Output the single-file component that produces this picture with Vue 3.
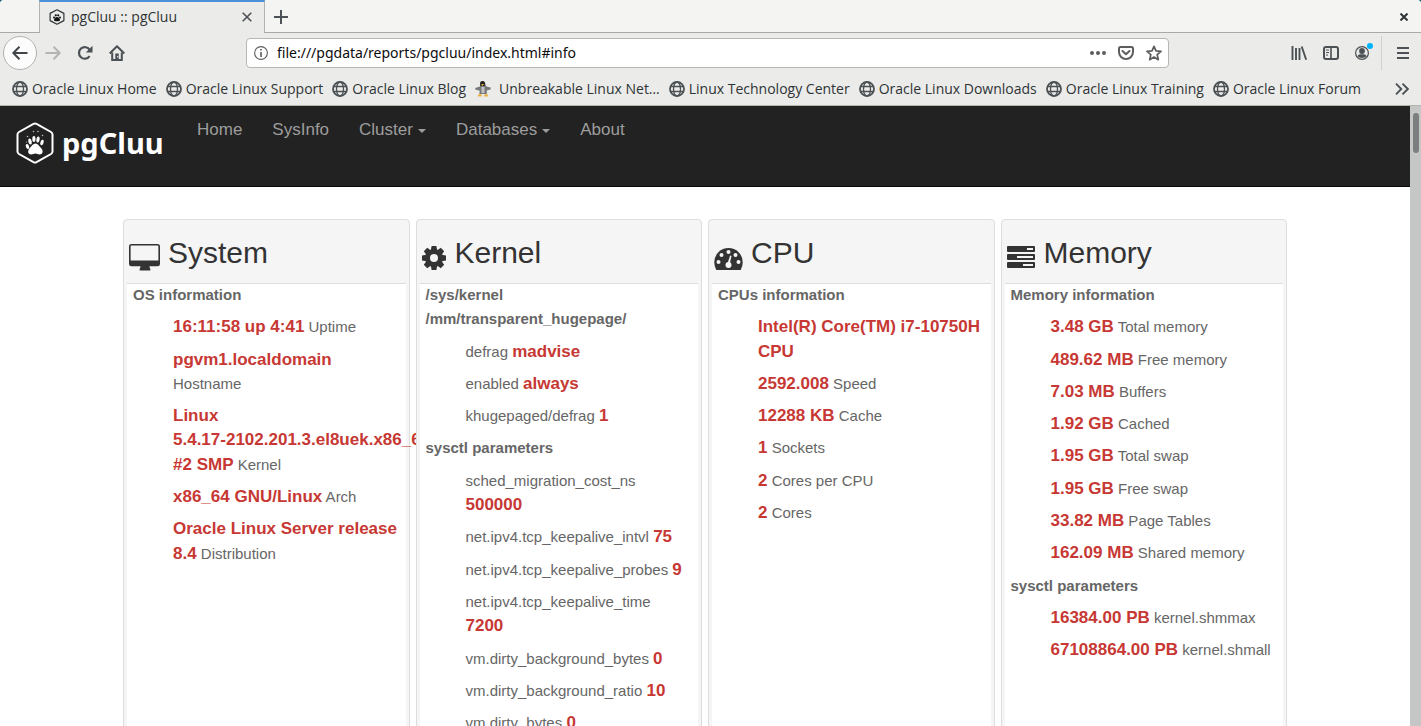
<script setup>
const bookmarks = [
  { label: 'Oracle Linux Home' },
  { label: 'Oracle Linux Support' },
  { label: 'Oracle Linux Blog' },
  { label: 'Unbreakable Linux Net…', penguin: true },
  { label: 'Linux Technology Center' },
  { label: 'Oracle Linux Downloads' },
  { label: 'Oracle Linux Training' },
  { label: 'Oracle Linux Forum' },
]

const menu = [
  { label: 'Home' },
  { label: 'SysInfo' },
  { label: 'Cluster', caret: true },
  { label: 'Databases', caret: true },
  { label: 'About' },
]

const panels = [
  {
    title: 'System',
    icon: 'desktop',
    groups: [
      {
        heading: ['OS information'],
        rows: [
          { value: '16:11:58 up 4:41', label: 'Uptime' },
          { value: 'pgvm1.localdomain', label: 'Hostname' },
          // word joiner keeps the release string on one line
          { value: 'Linux 5.4.17-\u20602102.201.3.el8uek.x86_64 #2 SMP', label: 'Kernel' },
          { value: 'x86_64 GNU/Linux', label: 'Arch' },
          { value: 'Oracle Linux Server release 8.4', label: 'Distribution' },
        ],
      },
    ],
  },
  {
    title: 'Kernel',
    icon: 'gear',
    groups: [
      {
        heading: ['/sys/kernel', '/mm/transparent_hugepage/'],
        rows: [
          { before: 'defrag', value: 'madvise' },
          { before: 'enabled', value: 'always' },
          { before: 'khugepaged/defrag', value: '1' },
        ],
      },
      {
        heading: ['sysctl parameters'],
        rows: [
          { before: 'sched_migration_cost_ns', value: '500000' },
          { before: 'net.ipv4.tcp_keepalive_intvl', value: '75' },
          { before: 'net.ipv4.tcp_keepalive_probes', value: '9' },
          { before: 'net.ipv4.tcp_keepalive_time', value: '7200' },
          { before: 'vm.dirty_background_bytes', value: '0' },
          { before: 'vm.dirty_background_ratio', value: '10' },
          { before: 'vm.dirty_bytes', value: '0' },
        ],
      },
    ],
  },
  {
    title: 'CPU',
    icon: 'gauge',
    groups: [
      {
        heading: ['CPUs information'],
        rows: [
          { value: 'Intel(R) Core(TM) i7-10750H CPU' },
          { value: '2592.008', label: 'Speed' },
          { value: '12288 KB', label: 'Cache' },
          { value: '1', label: 'Sockets' },
          { value: '2', label: 'Cores per CPU' },
          { value: '2', label: 'Cores' },
        ],
      },
    ],
  },
  {
    title: 'Memory',
    icon: 'bars',
    groups: [
      {
        heading: ['Memory information'],
        rows: [
          { value: '3.48 GB', label: 'Total memory' },
          { value: '489.62 MB', label: 'Free memory' },
          { value: '7.03 MB', label: 'Buffers' },
          { value: '1.92 GB', label: 'Cached' },
          { value: '1.95 GB', label: 'Total swap' },
          { value: '1.95 GB', label: 'Free swap' },
          { value: '33.82 MB', label: 'Page Tables' },
          { value: '162.09 MB', label: 'Shared memory' },
        ],
      },
      {
        heading: ['sysctl parameters'],
        rows: [
          { value: '16384.00 PB', label: 'kernel.shmmax' },
          { value: '67108864.00 PB', label: 'kernel.shmall' },
        ],
      },
    ],
  },
]
</script>

<template>
  <div class="window">
    <header class="chrome">
      <div class="tabs">
        <div class="tab">
          <svg width="16" height="16" viewBox="0 0 16 16">
            <path d="M8 .8 14.900 4.400V11.600L8 15.200 1.100 11.600V4.400Z" fill="none" stroke="#2e3436" stroke-width="1.200" stroke-linejoin="round" />
            <path d="M8 8c1.500 0 3 1.500 3 3 0 1.200-1.500 1.200-3 1.200S5 12.200 5 11c0-1.500 1.500-3 3-3Z" fill="#111" />
            <circle cx="5" cy="8.400" r="1" fill="#111" /><circle cx="6.800" cy="6.300" r="1.100" fill="#111" />
            <circle cx="9.200" cy="6.300" r="1.100" fill="#111" /><circle cx="11" cy="8.400" r="1" fill="#111" />
          </svg>
          <span class="tab-title">pgCluu :: pgCluu</span>
          <button class="icon-btn" aria-label="Close tab">
            <svg width="10" height="10" viewBox="0 0 10 10"><path d="M.7.7 9.300 9.300M9.300.7.7 9.300" stroke="#4b5154" stroke-width="1.600" /></svg>
          </button>
        </div>
        <button class="icon-btn new-tab" aria-label="New tab">
          <svg width="14" height="14" viewBox="0 0 14 14"><path d="M7 0V14M0 7H14" stroke="#4b5154" stroke-width="2" /></svg>
        </button>
        <button class="icon-btn close-window" aria-label="Close window">
          <svg width="8" height="8" viewBox="0 0 8 8"><path d="M.5.5 7.500 7.500M7.500.5.5 7.500" stroke="#2e3436" stroke-width="2" /></svg>
        </button>
      </div>

      <div class="toolbar">
        <div class="nav-buttons">
          <button class="icon-btn back" aria-label="Back">
            <svg width="16" height="16" viewBox="0 0 16 16"><path d="M15.500 8H1.500M7.500 1.800 1.300 8l6.200 6.200" fill="none" stroke="#3f4548" stroke-width="2" stroke-linejoin="round" /></svg>
          </button>
          <button class="icon-btn" aria-label="Forward">
            <svg width="16" height="16" viewBox="0 0 16 16"><path d="M.5 8H14.500M8.500 1.800 14.700 8l-6.200 6.200" fill="none" stroke="#b3b4b4" stroke-width="2" stroke-linejoin="round" /></svg>
          </button>
          <button class="icon-btn" aria-label="Reload">
            <svg width="16" height="16" viewBox="0 0 16 16"><path d="M12.600 11.200A5.800 5.800 0 1 1 12.800 5" fill="none" stroke="#4b5154" stroke-width="2.200" /><path d="M15.500.8V7.500H8.800Z" fill="#4b5154" /></svg>
          </button>
          <button class="icon-btn" aria-label="Home page">
            <svg width="16" height="16" viewBox="0 0 16 16"><path d="M.7 8.500 8 1.200l7.300 7.300" fill="none" stroke="#4b5154" stroke-width="2" stroke-linejoin="round" /><path d="M3.200 7.500V15H12.800V7.500" fill="none" stroke="#4b5154" stroke-width="2" /><path d="M6.300 15V8.500H9.700V15Z" fill="#4b5154" /><circle cx="8.700" cy="11.700" r=".7" fill="#ededeb" /></svg>
          </button>
        </div>
        <div class="url-bar">
          <svg width="14" height="14" viewBox="0 0 14 14"><circle cx="7" cy="7" r="6.400" fill="none" stroke="#5d5d5f" stroke-width="1.100" /><path d="M7 3V4.600M7 6V11" stroke="#5d5d5f" stroke-width="1.600" /></svg>
          <input class="url" type="text" aria-label="Address" value="file:///pgdata/reports/pgcluu/index.html#info">
          <button class="icon-btn" aria-label="Page actions">
            <svg width="16" height="16" viewBox="0 0 16 16" fill="#5d5d5f"><circle cx="2" cy="8" r="2" /><circle cx="8" cy="8" r="2" /><circle cx="14" cy="8" r="2" /></svg>
          </button>
          <button class="icon-btn" aria-label="Save to Pocket">
            <svg width="16" height="16" viewBox="0 0 16 16" fill="none" stroke="#5d5d5f" stroke-width="2"><path d="M2.500 2H13.500Q15 2 15 3.500V7A7 7 0 0 1 1 7V3.500Q1 2 2.500 2Z" /><path d="M4.500 6 8 9.300 11.500 6" stroke-linecap="round" stroke-linejoin="round" /></svg>
          </button>
          <button class="icon-btn" aria-label="Bookmark this page">
            <svg width="16" height="16" viewBox="0 0 16 16"><path d="M8 1.300 10 5.900 15 6.400 11.200 9.700 12.300 14.700 8 12.100 3.700 14.700 4.800 9.700 1 6.400 6 5.900Z" fill="none" stroke="#5d5d5f" stroke-width="1.700" stroke-linejoin="round" /></svg>
          </button>
        </div>
        <div class="tools">
          <button class="icon-btn" aria-label="Library">
            <svg width="16" height="16" viewBox="0 0 16 16" stroke="#4b5154" fill="none"><path d="M1.500 1V15M5 3V15M8.500 3V15" stroke-width="1.900" /><path d="M10.700 1.500 15.200 14.800" stroke-width="1.900" /></svg>
          </button>
          <button class="icon-btn" aria-label="Sidebars">
            <svg width="16" height="16" viewBox="0 0 16 16" stroke="#4b5154" fill="none"><rect x="1" y="2" width="14" height="12" rx="2" stroke-width="2" /><path d="M8 2V14" stroke-width="1.600" /><path d="M3 5H6M3 7.500H6M3 10H5" stroke-width="1" /></svg>
          </button>
          <button class="icon-btn" aria-label="Account">
            <svg width="20" height="20" viewBox="0 0 20 20"><circle cx="9" cy="10" r="6.400" fill="none" stroke="#4b5154" stroke-width="1.200" /><circle cx="9" cy="8" r="2.900" fill="#4b5154" /><path d="M4.300 13.300Q5.500 11.200 7 11.200H11Q12.500 11.200 13.700 13.300Q9 16.500 4.300 13.300Z" fill="#4b5154" /><circle cx="17" cy="3" r="3" fill="#00b3ff" /></svg>
          </button>
          <span class="divider"></span>
          <button class="icon-btn" aria-label="Open menu">
            <svg width="12" height="12" viewBox="0 0 12 12"><path d="M0 1H12M0 6H12M0 11H12" stroke="#4b5154" stroke-width="2" /></svg>
          </button>
        </div>
      </div>

      <nav class="bookmarks" aria-label="Bookmarks">
        <a v-for="b in bookmarks" :key="b.label" href="#" class="bookmark" :class="{ wide: b.penguin }">
          <svg v-if="b.penguin" width="16" height="16" viewBox="0 0 16 16">
            <path d="M5.500 1.500Q8 -1 10 1.500L11 5 13 6 15.800 6.500 15.500 8.500 11.800 9.500V13H4.500V9.500L.5 8.800.2 7 5 5.500Z" fill="#77797a" />
            <path d="M5 3Q5 0 7.500 0T10 3L9.500 5H5.500Z" fill="#222" />
            <path d="M6 3H9L7.500 5Z" fill="#f0b32c" />
            <path d="M6.500 6H9.500V12H6.500Z" fill="#c0c2c3" />
            <path d="M3 14Q5 12 7 14.500L6.500 15.500H3ZM9 14.500Q11 12 13 14V15.500H9Z" fill="#e9b243" />
          </svg>
          <svg v-else width="16" height="16" viewBox="0 0 16 16" fill="none" stroke="#4b5154">
            <circle cx="8" cy="8" r="7" stroke-width="1.800" /><ellipse cx="8" cy="8" rx="3.500" ry="7" stroke-width="1.300" /><path d="M1.500 5.500H14.500M1.500 10.500H14.500" stroke-width="1.300" />
          </svg>
          <span>{{ b.label }}</span>
        </a>
        <button class="icon-btn overflow" aria-label="More bookmarks">
          <svg width="14" height="12" viewBox="0 0 14 12"><path d="M1 .7 6.300 6 1 11.300M7.500.7 12.800 6 7.500 11.300" fill="none" stroke="#4b5154" stroke-width="1.900" /></svg>
        </button>
      </nav>
    </header>

    <div class="viewport">
      <div class="page">
        <nav class="navbar">
          <a href="#" class="brand">
            <svg width="38" height="42" viewBox="0 0 38 42">
              <path d="M17.500 1.800Q19 1 20.500 1.800L35 10Q36.500 11 36.500 12.500V29.500Q36.500 31 35 32L20.500 40.200Q19 41 17.500 40.200L3 32Q1.500 31 1.500 29.500V12.500Q1.500 11 3 10Z" fill="none" stroke="#fff" stroke-width="2" />
              <g fill="#fff">
                <path d="M19.500 21.500C22 21.500 23 24 25 26 28 29 26.500 32.500 23.500 32.500 22 32.500 21 31.500 19.500 31.500S16.500 32.500 15.200 32.500C12 32.500 11 29 13.800 26 15.700 24 17 21.500 19.500 21.500Z" />
                <ellipse cx="11.500" cy="24.500" rx="1.600" ry="2.600" transform="rotate(-20 11.500 24.500)" />
                <ellipse cx="14" cy="19.500" rx="1.700" ry="3" transform="rotate(-12 14 19.500)" />
                <ellipse cx="17.900" cy="17" rx="1.600" ry="3" />
                <ellipse cx="22" cy="17.500" rx="1.600" ry="3" transform="rotate(8 22 17.500)" />
                <ellipse cx="26" cy="20.500" rx="1.600" ry="2.800" transform="rotate(20 26 20.500)" />
                <g opacity=".7"><circle cx="11.500" cy="14.500" r=".8" /><circle cx="17.500" cy="9.500" r=".8" /><circle cx="22" cy="9.500" r=".8" /><circle cx="26.500" cy="13.500" r=".8" /><circle cx="10.500" cy="20" r=".6" /></g>
              </g>
            </svg>
            <span>pgCluu</span>
          </a>
          <ul class="menu">
            <li v-for="m in menu" :key="m.label">
              <a href="#">{{ m.label }}<span v-if="m.caret" class="caret"></span></a>
            </li>
          </ul>
        </nav>

        <main class="panels">
          <section v-for="p in panels" :key="p.title" class="panel">
            <h2 class="panel-head">
              <svg v-if="p.icon === 'desktop'" width="32" height="28" viewBox="0 0 32 28"><path d="M2.500 0H28.500Q31 0 31 2.500V20Q31 22.300 28.500 22.300H20.500Q20.500 24 21.300 24.800V26.500H10.700V24.800Q11.500 24 11.500 22.300H2.500Q0 22.300 0 20V2.500Q0 0 2.500 0ZM2.500 1.500Q1.600 1.500 1.600 2.400V16.500H29.400V2.400Q29.400 1.500 28.500 1.500Z" fill="#333" fill-rule="evenodd" /></svg>
              <svg v-else-if="p.icon === 'gear'" width="26" height="28" viewBox="0 0 26 28"><g fill="#333" transform="translate(12 14)"><path v-for="n in 4" :key="n" d="M-2.400-12H2.400L3.200-7.500V7.500L2.400 12H-2.400L-3.200 7.500V-7.500Z" :transform="`rotate(${n * 45})`" /><circle r="9" /><circle r="4" fill="#f5f5f5" /></g></svg>
              <svg v-else-if="p.icon === 'gauge'" width="30" height="28" viewBox="0 0 30 28"><path d="M2.300 26Q.3 22.500 .3 18.200A14.200 14.200 0 0 1 28.700 18.200Q28.700 22.500 26.700 26Z" fill="#333" /><g fill="#f5f5f5"><circle cx="4.500" cy="18" r="2" /><circle cx="7.500" cy="11" r="2" /><circle cx="14.500" cy="8" r="2" /><circle cx="21.500" cy="11" r="2" /><circle cx="24.500" cy="18" r="2" /><circle cx="14.500" cy="21" r="3" /><path d="M13.500 19.500 16.100 11.500 17.500 11.900 15.800 19.500Z" /></g></svg>
              <svg v-else width="30" height="28" viewBox="0 0 30 28"><g fill="#333"><rect x="0" y="2" width="28" height="6" rx="1" /><rect x="0" y="10" width="28" height="6" rx="1" /><rect x="0" y="18" width="28" height="6" rx="1" /></g><g fill="#f5f5f5"><rect x="20" y="4" width="6" height="2" /><rect x="10" y="12" width="16" height="2" /><rect x="16" y="20" width="10" height="2" /></g></svg>
              <span>{{ p.title }}</span>
            </h2>
            <div class="panel-body">
              <template v-for="g in p.groups" :key="g.heading[0]">
                <h3><span v-for="line in g.heading" :key="line">{{ line }}</span></h3>
                <ul>
                  <li v-for="(r, i) in g.rows" :key="i">{{ r.before }} <strong>{{ r.value }}</strong> {{ r.label }}</li>
                </ul>
              </template>
            </div>
          </section>
        </main>
      </div>
      <div class="scrollbar"><div class="thumb"></div></div>
    </div>
  </div>
</template>

<style>
body { margin: 0; }
</style>

<style scoped>
.window {
  display: flex;
  flex-direction: column;
  height: 100vh;
  overflow: hidden;
  background: #0b5f6b;
  font-family: "Liberation Sans", Arial, sans-serif;
}
a { text-decoration: none; }
ul { list-style: none; margin: 0; padding: 0; }
svg { display: block; flex: none; }

.chrome {
  overflow: hidden;
  background: #ebebe9;
  border-bottom: 1px solid #b2b4ae;
  border-radius: 4px 4px 0 0;
  color: #2e3436;
  font: 14px/20px "Open Sans", "Noto Sans", sans-serif;
}
.icon-btn {
  display: flex;
  align-items: center;
  justify-content: center;
  padding: 0;
  border: 0;
  background: none;
}
.tabs {
  display: flex;
  height: 33px;
  box-sizing: border-box;
  padding-left: 39px;
  background: linear-gradient(#a9aaa8, #a9aaa8) bottom / 100% 1px no-repeat #f4f4f3;
}
.tab {
  display: flex;
  align-items: center;
  box-sizing: border-box;
  width: 226px;
  padding: 0 12px 1px 9px;
  background: #ebebe9;
  border: 1px solid #b2b4ae;
  border-top: 2px solid #4a90d9;
  border-bottom: 0;
}
.tab-title { flex: 1; padding-left: 6px; }
.new-tab { width: 32px; }
.close-window { width: 34px; margin-left: auto; }

.toolbar {
  display: flex;
  align-items: center;
  height: 40px;
}
.nav-buttons { display: flex; width: 246px; align-items: center; }
.nav-buttons .icon-btn { width: 32px; height: 34px; }
.nav-buttons .back {
  width: 34px;
  margin: 0 0 0 3px;
  box-sizing: border-box;
  border: 1px solid #b2b3b0;
  border-radius: 50%;
  background: #fcfcfc;
}
.url-bar {
  display: flex;
  flex: 1;
  align-items: center;
  box-sizing: border-box;
  height: 30px;
  padding: 0 6px 0 7px;
  border: 1px solid #b6b6b3;
  border-radius: 4px;
  background: #fff;
}
.url {
  flex: 1;
  min-width: 0;
  padding: 0 0 0 9px;
  border: 0;
  outline: 0;
  background: none;
  color: #0c0c0d;
  font: 14px/20px "Noto Sans", sans-serif;
}
.url-bar .icon-btn { margin-left: 12px; }
.url-bar .url + .icon-btn { margin-left: 0; }
.tools {
  display: flex;
  align-items: center;
  justify-content: flex-end;
  box-sizing: border-box;
  width: 252px;
  padding-right: 2px;
}
.tools .icon-btn { width: 32px; }
.divider { width: 1px; height: 34px; background: #d0d0ce; margin: 0 5px 0 2px; }

.bookmarks {
  display: flex;
  align-items: center;
  gap: 9px;
  height: 32px;
  padding: 0 12px;
}
.bookmark { display: flex; align-items: center; gap: 4px; color: #2e3436; white-space: nowrap; }
.bookmark.wide { gap: 8px; }
.overflow { margin-left: auto; }

.viewport { display: flex; flex: 1; min-height: 0; background: #fff; }
.page { flex: 1; min-width: 0; overflow: hidden; }
.scrollbar { width: 11px; background: #c5c7c6; box-sizing: border-box; padding: 7px 3px; }
.thumb { width: 6px; height: 40px; border-radius: 3px; background: #7b7f80; }

.navbar {
  display: flex;
  height: 80px;
  background: #222;
  border-bottom: 1px solid #080808;
}
.brand {
  display: flex;
  align-items: flex-start;
  gap: 8px;
  box-sizing: border-box;
  width: 182px;
  padding: 16px 0 0 16px;
  color: #fff;
  font: bold 29px/42px "Noto Sans", sans-serif;
}
.menu { display: flex; font-size: 17px; line-height: 24px; padding-top: 12px; }
.menu a { display: block; padding: 0 15px; color: #9d9d9d; }
.caret {
  display: inline-block;
  margin-left: 5px;
  vertical-align: middle;
  border: 4px solid transparent;
  border-top-color: #9d9d9d;
  border-bottom: 0;
}

.panels {
  display: grid;
  grid-template-columns: repeat(4, 1fr);
  max-width: 1170px;
  margin: 32px auto 0;
}
.panel {
  position: relative;
  display: flex;
  flex-direction: column;
  min-width: 0;
  margin: 0 3px;
  padding: 0 3px;
  border: 1px solid #ddd;
  border-radius: 4px;
  background: #f5f5f5;
}
.panel-head {
  display: flex;
  align-items: flex-start;
  gap: 7px;
  margin: 0;
  height: 63px;
  padding-left: 2px;
  border-bottom: 1px solid #ddd;
  color: #333;
  font-size: 30px;
  font-weight: 400;
  line-height: 66px;
}
.panel-head svg { margin-top: 24px; }
.panel-body {
  display: flow-root;
  flex: 1;
  padding: 0 6px 10px;
  background: #fff;
  color: #666;
  font-size: 15px;
  line-height: 1.62;
}
.panel-body h3 { margin: 0 0 8px; font-size: 15px; font-weight: 700; }
.panel-body h3:first-child { margin-top: -1px; }
.panel-body h3 span { display: block; }
.panel-body ul { padding-left: 40px; }
.panel-body li { margin-bottom: 8px; }
.panel-body strong { color: #c73834; font-size: 17px; line-height: 1; }
</style>
